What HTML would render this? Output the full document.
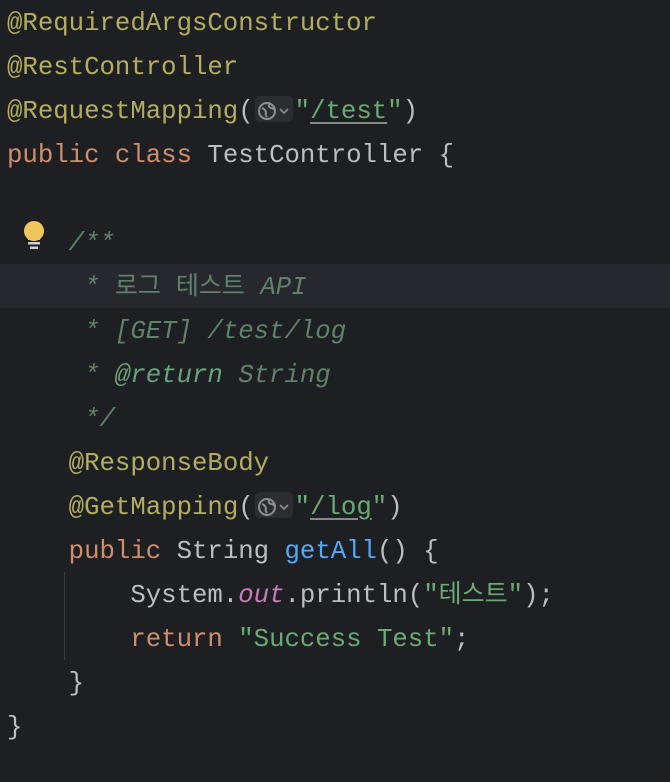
<!DOCTYPE html>
<html><head><meta charset="utf-8"><style>
html,body{margin:0;padding:0;background:#1e1f22;width:670px;height:782px;overflow:hidden}
.c{position:absolute;left:0;top:2px;width:670px;font-family:"Liberation Mono","Noto Sans CJK KR",monospace;font-size:25.7px;color:#bcbec4}
.l{height:44px;line-height:44px;white-space:pre;padding-left:7px;position:relative}
.hl{position:absolute;left:0;top:264px;width:670px;height:44px;background:#26282e}
.a{color:#b3ae60}.k{color:#cf8e6d}.s{color:#6aab73}.cm{color:#5f826b;font-style:italic}.f{color:#56a8f5}.o{color:#c77dbb;font-style:italic}
.kr{font-size:25px;font-style:normal}
u{text-decoration-color:#888;text-underline-offset:4px}
.g{display:inline-block;width:38px;height:26px;background:#2b2d30;border-radius:5px;vertical-align:middle;position:relative;top:-2px;margin:0 2px 0 1px}
.guide{position:absolute;left:64px;top:572px;width:1px;height:88px;background:#393b40}
</style></head><body>
<div class="hl"></div>
<div class="guide"></div>
<svg style="position:absolute;left:23px;top:221px" width="24" height="30" viewBox="0 0 24 30"><circle cx="11" cy="10" r="10" fill="#f2c55c"/><rect x="5" y="14" width="12" height="5" fill="#f2c55c"/><rect x="5" y="21" width="12" height="2.5" fill="#ced0d6"/><rect x="7" y="25.5" width="8" height="2.5" fill="#ced0d6"/></svg>
<div class="c">
<div class="l"><span class="a">@RequiredArgsConstructor</span></div>
<div class="l"><span class="a">@RestController</span></div>
<div class="l"><span class="a">@RequestMapping</span>(<span class="g"><svg width="38" height="26" viewBox="0 0 38 26"><circle cx="12" cy="13" r="8" fill="none" stroke="#8c8f94" stroke-width="2"/><path d="M7 10 q3 1 4 4 q-1 3 1 5 M14 6 q-1 3 2 4 q3 0 4 3" fill="none" stroke="#8c8f94" stroke-width="2"/><path d="M25 11 l4 4 l4-4" fill="none" stroke="#8c8f94" stroke-width="1.6"/></svg></span><span class="s">"<u>/test</u>"</span>)</div>
<div class="l"><span class="k">public class </span>TestController {</div>
<div class="l"> </div>
<div class="l"><span class="cm">    /**</span></div>
<div class="l"><span class="cm">     * <span class="kr">로그 테스트</span> API</span></div>
<div class="l"><span class="cm">     * [GET] /test/log</span></div>
<div class="l"><span class="cm">     * <span style="font-style:italic;color:#67a37c">@return</span> String</span></div>
<div class="l"><span class="cm">     */</span></div>
<div class="l">    <span class="a">@ResponseBody</span></div>
<div class="l">    <span class="a">@GetMapping</span>(<span class="g"><svg width="38" height="26" viewBox="0 0 38 26"><circle cx="12" cy="13" r="8" fill="none" stroke="#8c8f94" stroke-width="2"/><path d="M7 10 q3 1 4 4 q-1 3 1 5 M14 6 q-1 3 2 4 q3 0 4 3" fill="none" stroke="#8c8f94" stroke-width="2"/><path d="M25 11 l4 4 l4-4" fill="none" stroke="#8c8f94" stroke-width="1.6"/></svg></span><span class="s">"<u>/log</u>"</span>)</div>
<div class="l">    <span class="k">public </span>String <span class="f">getAll</span>() {</div>
<div class="l">        System.<span class="o">out</span>.println(<span class="s">"<span class="kr">테스트</span>"</span>);</div>
<div class="l">        <span class="k">return </span><span class="s">"Success Test"</span>;</div>
<div class="l">    }</div>
<div class="l">}</div>
</div>
</body></html>
